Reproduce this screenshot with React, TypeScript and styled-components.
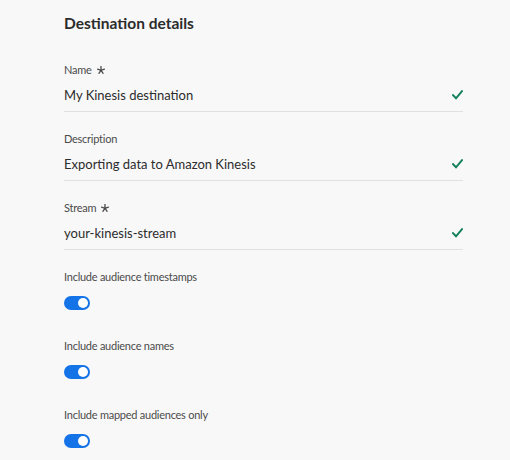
import React from "react";
import styled, { createGlobalStyle } from "styled-components";

const Global = createGlobalStyle`
  html, body { margin: 0; padding: 0; background: #f8f8f8; }
  body { font-family: Lato, "Open Sans", sans-serif; -webkit-font-smoothing: antialiased; }
`;

const Page = styled.div`
  width: 510px;
  height: 460px;
  box-sizing: border-box;
  padding: 13px 47px 0 64px;
  background: #f8f8f8;
  overflow: hidden;
`;

const Title = styled.h2`
  margin: 0;
  font-size: 15.5px;
  line-height: 20px;
  font-weight: 700;
  color: #2c2c2c;
`;

const Form = styled.div`
  display: flex;
  flex-direction: column;
  margin-top: 29px;
`;

const Field = styled.div`
  display: flex;
  flex-direction: column;
  height: 69px;
`;

const Label = styled.div`
  display: flex;
  align-items: center;
  gap: 5px;
  font-size: 11px;
  letter-spacing: -0.25px;
  line-height: 16px;
  color: #4b4b4b;
`;

const InputRow = styled.div`
  display: flex;
  align-items: center;
  justify-content: space-between;
  height: 31px;
  margin-top: 1px;
  padding-bottom: 1px;
  border-bottom: 1px solid #e1e1e1;
`;

const Value = styled.span`
  font-size: 13px;
  color: #2c2c2c;
`;

const Asterisk = () => (
  <svg width="8" height="8" viewBox="0 0 8 8">
    <g stroke="#4b4b4b" strokeWidth="1.3" strokeLinecap="round">
      <line x1="4" y1="4.3" x2="4" y2="0.6" />
      <line x1="4" y1="4.3" x2="7.4" y2="3.2" />
      <line x1="4" y1="4.3" x2="0.6" y2="3.2" />
      <line x1="4" y1="4.3" x2="6.1" y2="7.3" />
      <line x1="4" y1="4.3" x2="1.9" y2="7.3" />
    </g>
  </svg>
);

const Check = () => (
  <svg width="11" height="10" viewBox="0 0 11 10">
    <path d="M1 5.2 L4 8.3 L10 1.2" fill="none" stroke="#12805c" strokeWidth="2" strokeLinecap="square" />
  </svg>
);

const ToggleField = styled.div`
  display: flex;
  flex-direction: column;
  height: 69px;
`;

const Switch = styled.span<{ $on: boolean }>`
  position: relative;
  display: block;
  width: 26px;
  height: 14px;
  border-radius: 7px;
  margin-top: 11px;
  background: ${(p) => (p.$on ? "#1473e6" : "#b3b3b3")};
  &::after {
    content: "";
    position: absolute;
    top: 2px;
    left: ${(p) => (p.$on ? "14px" : "2px")};
    width: 10px;
    height: 10px;
    border-radius: 50%;
    background: #fff;
  }
`;

const fields = [
  { label: "Name", required: true, value: "My Kinesis destination" },
  { label: "Description", required: false, value: "Exporting data to Amazon Kinesis" },
  { label: "Stream", required: true, value: "your-kinesis-stream" },
];

const toggles = [
  "Include audience timestamps",
  "Include audience names",
  "Include mapped audiences only",
];

export default function App() {
  return (
    <Page>
      <Global />
      <Title>Destination details</Title>
      <Form>
        {fields.map((f) => (
          <Field key={f.label}>
            <Label>
              {f.label}
              {f.required && <Asterisk />}
            </Label>
            <InputRow>
              <Value>{f.value}</Value>
              <Check />
            </InputRow>
          </Field>
        ))}
        {toggles.map((t) => (
          <ToggleField key={t}>
            <Label>{t}</Label>
            <Switch $on />
          </ToggleField>
        ))}
      </Form>
    </Page>
  );
}
